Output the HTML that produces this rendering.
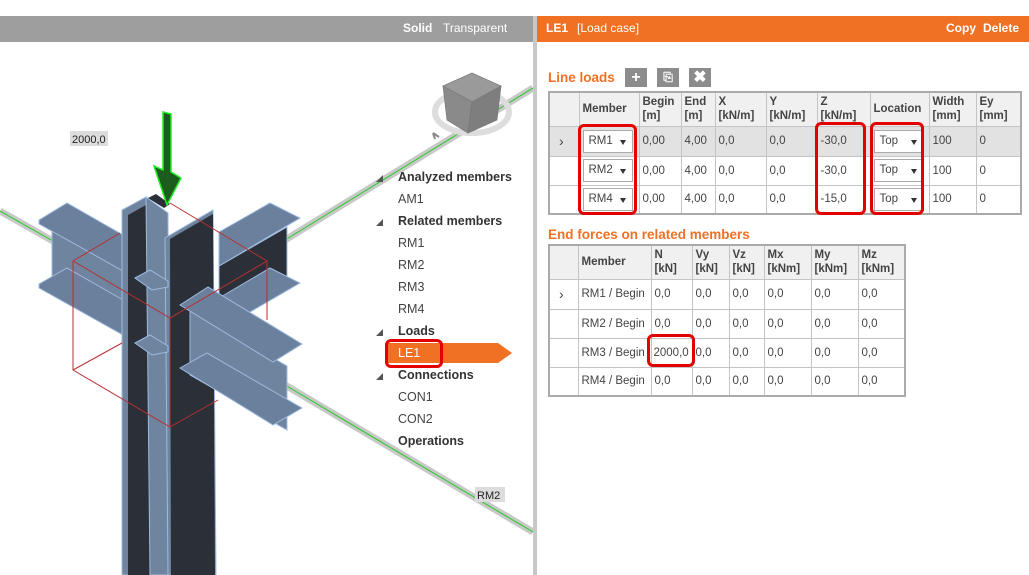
<!DOCTYPE html>
<html><head><meta charset="utf-8"><style>
*{margin:0;padding:0;box-sizing:border-box}
body{width:1029px;height:575px;overflow:hidden;background:#fff;font-family:"Liberation Sans",sans-serif;font-size:12px;color:#333;position:relative}
.abs{position:absolute}
.hdrL{left:0;top:16px;width:533px;height:26px;background:#9e9e9e;color:#fff}
.sep{left:533px;top:16px;width:4px;height:559px;background:#c8c8c8}
.hdrR{left:537px;top:16px;width:492px;height:26px;background:#f07024;color:#fff}
.tree div{position:absolute;left:398px;font-size:12.5px;color:#444}
.tree b{font-weight:bold;color:#333}
.tri{position:absolute;left:376px;width:0;height:0;border-left:7px solid transparent;border-bottom:7px solid #555}
table{border-collapse:collapse;position:absolute;font-size:11.5px;table-layout:fixed}
td{border:1px solid #c4c4c4;padding:0 3px;vertical-align:middle;color:#444;white-space:nowrap;overflow:hidden}
th{border:1px solid #c4c4c4;background:#f0f0f0;font-weight:bold;text-align:left;padding:0 3px;line-height:14px;color:#444;font-size:11.5px;white-space:nowrap;overflow:hidden}
table{border:2px solid #aaa}
.sel td{background:#e2e2e2}
.dd{display:inline-block;border:1px solid #aaa;background:#fff;height:23px;line-height:21px;padding-left:5px;position:relative;width:50px}
.dd:after{content:"";position:absolute;right:6px;top:9px;border-left:3.5px solid transparent;border-right:3.5px solid transparent;border-top:5px solid #333}
.red{position:absolute;border:3px solid #e30000;border-radius:6px}
.ttl{color:#f07024;font-weight:bold;font-size:13.5px}
.ib{position:absolute;width:22px;height:19px;background:#8c8c8c;color:#fff;text-align:center;font-weight:bold;line-height:19px;font-size:16px}
</style></head><body>
<div class="abs hdrL"><span class="abs" style="left:403px;top:5px;font-weight:bold">Solid</span><span class="abs" style="left:443px;top:5px">Transparent</span></div>
<div class="abs sep"></div>
<div class="abs hdrR"><span class="abs" style="left:9px;top:5px;font-weight:bold">LE1</span><span class="abs" style="left:40px;top:5px">[Load case]</span><span class="abs" style="left:409px;top:5px;font-weight:bold">Copy</span><span class="abs" style="left:446px;top:5px;font-weight:bold">Delete</span></div>

<svg class="abs" style="left:0;top:42px" width="533" height="533" viewBox="0 42 533 533">
<g stroke="#c8c8c8" stroke-width="7" fill="none">
<line x1="0" y1="211" x2="60" y2="245"/>
<line x1="285" y1="240" x2="533" y2="88"/>
<line x1="285" y1="385" x2="533" y2="532"/>
</g>
<g stroke="#22cc22" stroke-width="1" fill="none">
<line x1="0" y1="211" x2="60" y2="245"/>
<line x1="285" y1="240" x2="533" y2="88"/>
<line x1="285" y1="385" x2="533" y2="532"/>
</g>
<ellipse cx="472" cy="112" rx="37" ry="21" fill="none" stroke="#ddd" stroke-width="6"/>
<polygon points="443,86 472,73 501,86 472,102" fill="#9a9a9a" stroke="#777" stroke-width="0.7"/>
<polygon points="443,86 472,102 468,133 447,120" fill="#8a8a8a" stroke="#777" stroke-width="0.7"/>
<polygon points="472,102 501,86 497,120 468,133" fill="#7e7e7e" stroke="#777" stroke-width="0.7"/>
<path d="M433 133 l6 4 m-6 -4 l2 6" stroke="#888" stroke-width="2" fill="none"/>
<!-- left back beam -->
<polygon points="52,228 123,268 123,330 52,290" fill="#6f849f" stroke="#9dbbe0"/>
<polygon points="39,220 67,203 123,235 123,271 39,224" fill="#6b809d" stroke="#9dbbe0"/>
<polygon points="39,284 67,268 123,300 123,335 39,288" fill="#6b809d" stroke="#9dbbe0"/>
<!-- right back beam -->
<polygon points="219,266 287,227 287,287 219,325" fill="#2b2f37" stroke="#9dbbe0"/>
<polygon points="219,232 270,203 300,218 219,266" fill="#6b809d" stroke="#9dbbe0"/>
<polygon points="219,298 270,268 300,283 219,330" fill="#6b809d" stroke="#9dbbe0"/>
<!-- column -->
<polygon points="122,210 146,197 150,575 122,575" fill="#6f849f" stroke="#9dbbe0"/>
<polygon points="128,215 146,205 150,575 128,575" fill="#2b2f37"/>
<polygon points="146,197 168,213 170,575 150,575" fill="#6f849f" stroke="#9dbbe0"/>
<polygon points="148,198 156,194 170,204 164,208" fill="#2b2f37"/>
<polygon points="165,238 213,210 216,575 168,575" fill="#6f849f" stroke="#9dbbe0"/>
<polygon points="170,239 213,214 215,575 171,575" fill="#2b2f37"/>
<polygon points="135,278 150,270 168,281 168,287 152,290" fill="#6f849f" stroke="#9dbbe0"/>
<polygon points="135,343 150,335 168,346 168,352 152,355" fill="#6f849f" stroke="#9dbbe0"/>
<!-- front beam -->
<polygon points="190,310 287,366 287,430 190,375" fill="#6f849f" stroke="#9dbbe0"/>
<polygon points="180,368 207,353 302,408 273,425" fill="#6b809d" stroke="#9dbbe0"/>
<polygon points="180,305 208,287 302,344 273,362" fill="#6b809d" stroke="#9dbbe0"/>
<!-- red box -->
<g stroke="#b83030" stroke-width="1" fill="none">
<polyline points="73,261 170,318 267,261 170,203"/>
<line x1="73" y1="261" x2="120" y2="233"/>
<polyline points="73,261 73,370 170,427 170,318"/>
<line x1="267" y1="261" x2="267" y2="320"/>
<line x1="73" y1="370" x2="122" y2="343"/>
<line x1="170" y1="427" x2="218" y2="400"/>
</g>
<!-- arrow -->
<polygon points="163,112 171,114 171,172 181,178 167,205 154,166 163,170" fill="#1c5c1c" stroke="#22ee22" stroke-width="1.5"/>
<rect x="70" y="131" width="38" height="15" fill="#dcdcdc"/>
<text x="72" y="143" font-size="11" font-family="Liberation Sans" fill="#222">2000,0</text>
<rect x="475" y="487" width="30" height="15" fill="#dcdcdc"/>
<text x="477" y="499" font-size="11" font-family="Liberation Sans" fill="#222">RM2</text>
<polygon points="388,343 498,343 512,353 498,363 388,363" fill="#f07024"/>
</svg>

<div class="tree">
<span class="tri" style="top:175px"></span><div style="top:170px"><b>Analyzed members</b></div>
<div style="top:192px">AM1</div>
<span class="tri" style="top:219px"></span><div style="top:214px"><b>Related members</b></div>
<div style="top:236px">RM1</div>
<div style="top:258px">RM2</div>
<div style="top:280px">RM3</div>
<div style="top:302px">RM4</div>
<span class="tri" style="top:329px"></span><div style="top:324px"><b>Loads</b></div>
<div style="top:346px;color:#fff">LE1</div>
<span class="tri" style="top:373px"></span><div style="top:368px"><b>Connections</b></div>
<div style="top:390px">CON1</div>
<div style="top:412px">CON2</div>
<div style="top:434px"><b>Operations</b></div>
</div>
<div class="red" style="left:385px;top:339px;width:58px;height:29px"></div>

<div class="abs ttl" style="left:548px;top:70px">Line loads</div>
<div class="ib" style="left:625px;top:68px">+</div>
<div class="ib" style="left:657px;top:68px;font-size:12px">⎘</div>
<div class="ib" style="left:689px;top:68px">✖</div>

<table style="left:548px;top:91px;width:474px">
<colgroup><col style="width:30px"><col style="width:60px"><col style="width:42px"><col style="width:34px"><col style="width:51px"><col style="width:51px"><col style="width:53px"><col style="width:59px"><col style="width:47px"><col></colgroup>
<tr style="height:34px"><th></th><th>Member</th><th>Begin<br>[m]</th><th>End<br>[m]</th><th>X<br>[kN/m]</th><th>Y<br>[kN/m]</th><th>Z<br>[kN/m]</th><th>Location</th><th>Width<br>[mm]</th><th>Ey<br>[mm]</th></tr>
<tr class="sel" style="height:30px"><td style="font-size:14px;padding-left:9px">›</td><td style="padding:0 3px"><span class="dd">RM1</span></td><td>0,00</td><td>4,00</td><td>0,0</td><td>0,0</td><td>-30,0</td><td style="padding:0 3px"><span class="dd">Top</span></td><td>100</td><td>0</td></tr>
<tr style="height:29px"><td></td><td style="padding:0 3px"><span class="dd">RM2</span></td><td>0,00</td><td>4,00</td><td>0,0</td><td>0,0</td><td>-30,0</td><td style="padding:0 3px"><span class="dd">Top</span></td><td>100</td><td>0</td></tr>
<tr style="height:29px"><td></td><td style="padding:0 3px"><span class="dd">RM4</span></td><td>0,00</td><td>4,00</td><td>0,0</td><td>0,0</td><td>-15,0</td><td style="padding:0 3px"><span class="dd">Top</span></td><td>100</td><td>0</td></tr>
</table>
<div class="red" style="left:578px;top:124px;width:59px;height:91px"></div>
<div class="red" style="left:815px;top:122px;width:51px;height:93px"></div>
<div class="red" style="left:870px;top:122px;width:54px;height:93px"></div>

<div class="abs ttl" style="left:548px;top:227px">End forces on related members</div>
<table style="left:548px;top:244px;width:358px">
<colgroup><col style="width:29px"><col style="width:73px"><col style="width:41px"><col style="width:37px"><col style="width:35px"><col style="width:47px"><col style="width:47px"><col></colgroup>
<tr style="height:34px"><th></th><th>Member</th><th>N<br>[kN]</th><th>Vy<br>[kN]</th><th>Vz<br>[kN]</th><th>Mx<br>[kNm]</th><th>My<br>[kNm]</th><th>Mz<br>[kNm]</th></tr>
<tr style="height:30px"><td style="font-size:14px;padding-left:9px">›</td><td>RM1 / Begin</td><td>0,0</td><td>0,0</td><td>0,0</td><td>0,0</td><td>0,0</td><td>0,0</td></tr>
<tr style="height:29px"><td></td><td>RM2 / Begin</td><td>0,0</td><td>0,0</td><td>0,0</td><td>0,0</td><td>0,0</td><td>0,0</td></tr>
<tr style="height:29px"><td></td><td>RM3 / Begin</td><td style="padding:0 2px">2000,0</td><td>0,0</td><td>0,0</td><td>0,0</td><td>0,0</td><td>0,0</td></tr>
<tr style="height:29px"><td></td><td>RM4 / Begin</td><td>0,0</td><td>0,0</td><td>0,0</td><td>0,0</td><td>0,0</td><td>0,0</td></tr>
</table>
<div class="red" style="left:647px;top:334px;width:48px;height:33px"></div>
</body></html>
